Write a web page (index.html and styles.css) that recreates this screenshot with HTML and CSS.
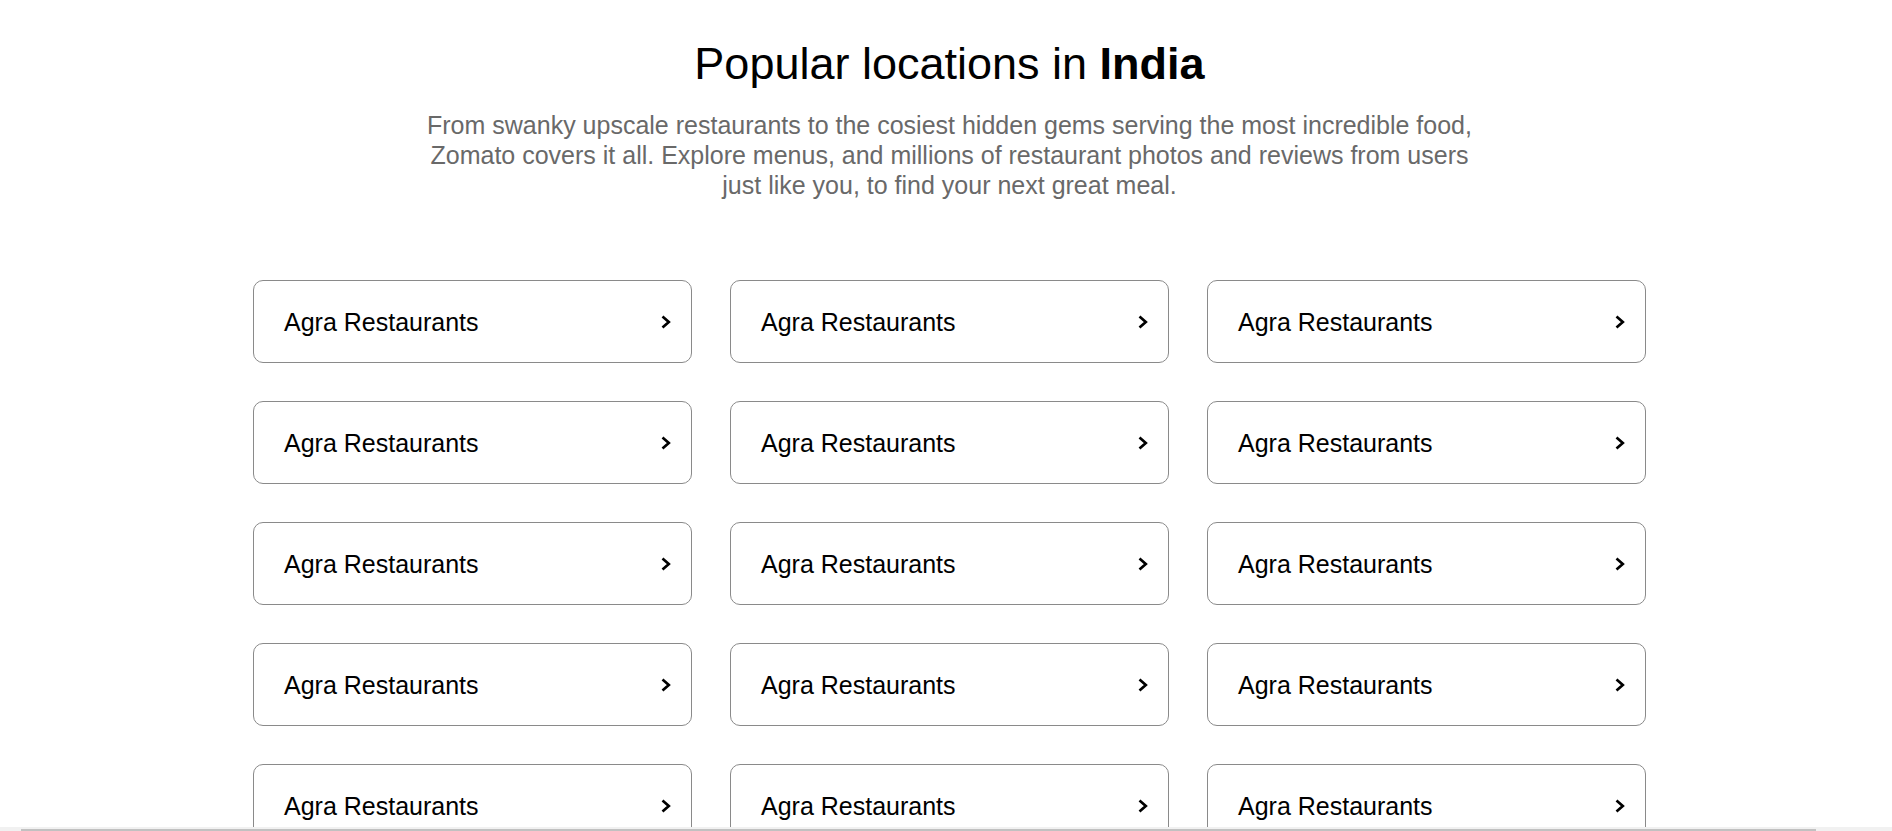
FILE: index.html
```html
<!DOCTYPE html>
<html lang="en">
<head>
<meta charset="utf-8">
<title>Popular locations in India</title>
<link rel="stylesheet" href="styles.css">
</head>
<body>
<div class="page">
  <header class="intro">
    <h1 class="title">Popular locations in <b>India</b></h1>
    <p class="lead">From swanky upscale restaurants to the cosiest hidden gems serving the most incredible food, Zomato covers it all. Explore menus, and millions of restaurant photos and reviews from users just like you, to find your next great meal.</p>
  </header>
  <div class="grid">
    <a class="card" href="#"><span class="name">Agra Restaurants</span><svg class="chev" viewBox="0 0 12 16" width="12" height="16"><polyline points="2.5,2.6 8.8,8.1 2.5,13.6"/></svg></a>
    <a class="card" href="#"><span class="name">Agra Restaurants</span><svg class="chev" viewBox="0 0 12 16" width="12" height="16"><polyline points="2.5,2.6 8.8,8.1 2.5,13.6"/></svg></a>
    <a class="card" href="#"><span class="name">Agra Restaurants</span><svg class="chev" viewBox="0 0 12 16" width="12" height="16"><polyline points="2.5,2.6 8.8,8.1 2.5,13.6"/></svg></a>
    <a class="card" href="#"><span class="name">Agra Restaurants</span><svg class="chev" viewBox="0 0 12 16" width="12" height="16"><polyline points="2.5,2.6 8.8,8.1 2.5,13.6"/></svg></a>
    <a class="card" href="#"><span class="name">Agra Restaurants</span><svg class="chev" viewBox="0 0 12 16" width="12" height="16"><polyline points="2.5,2.6 8.8,8.1 2.5,13.6"/></svg></a>
    <a class="card" href="#"><span class="name">Agra Restaurants</span><svg class="chev" viewBox="0 0 12 16" width="12" height="16"><polyline points="2.5,2.6 8.8,8.1 2.5,13.6"/></svg></a>
    <a class="card" href="#"><span class="name">Agra Restaurants</span><svg class="chev" viewBox="0 0 12 16" width="12" height="16"><polyline points="2.5,2.6 8.8,8.1 2.5,13.6"/></svg></a>
    <a class="card" href="#"><span class="name">Agra Restaurants</span><svg class="chev" viewBox="0 0 12 16" width="12" height="16"><polyline points="2.5,2.6 8.8,8.1 2.5,13.6"/></svg></a>
    <a class="card" href="#"><span class="name">Agra Restaurants</span><svg class="chev" viewBox="0 0 12 16" width="12" height="16"><polyline points="2.5,2.6 8.8,8.1 2.5,13.6"/></svg></a>
    <a class="card" href="#"><span class="name">Agra Restaurants</span><svg class="chev" viewBox="0 0 12 16" width="12" height="16"><polyline points="2.5,2.6 8.8,8.1 2.5,13.6"/></svg></a>
    <a class="card" href="#"><span class="name">Agra Restaurants</span><svg class="chev" viewBox="0 0 12 16" width="12" height="16"><polyline points="2.5,2.6 8.8,8.1 2.5,13.6"/></svg></a>
    <a class="card" href="#"><span class="name">Agra Restaurants</span><svg class="chev" viewBox="0 0 12 16" width="12" height="16"><polyline points="2.5,2.6 8.8,8.1 2.5,13.6"/></svg></a>
    <a class="card" href="#"><span class="name">Agra Restaurants</span><svg class="chev" viewBox="0 0 12 16" width="12" height="16"><polyline points="2.5,2.6 8.8,8.1 2.5,13.6"/></svg></a>
    <a class="card" href="#"><span class="name">Agra Restaurants</span><svg class="chev" viewBox="0 0 12 16" width="12" height="16"><polyline points="2.5,2.6 8.8,8.1 2.5,13.6"/></svg></a>
    <a class="card" href="#"><span class="name">Agra Restaurants</span><svg class="chev" viewBox="0 0 12 16" width="12" height="16"><polyline points="2.5,2.6 8.8,8.1 2.5,13.6"/></svg></a>
  </div>
</div>
<div class="hscroll"><div class="hthumb"></div></div>
</body>
</html>
```

FILE: styles.css
```css
html, body {
  margin: 0;
  padding: 0;
  overflow: hidden;
  background: #ffffff;
}

body {
  font-family: "Liberation Sans", Arial, sans-serif;
  color: #000000;
  height: 831px;
}

.page {
  width: 1899px;
}

.intro {
  display: flex;
  flex-direction: column;
  align-items: center;
  text-align: center;
}

.title {
  margin: 38px 0 0;
  font-size: 45px;
  font-weight: 400;
  line-height: 51px;
}

.title b {
  font-weight: 700;
}

.lead {
  margin: 21px 0 0;
  width: 1070px;
  font-size: 25px;
  line-height: 30px;
  color: #696969;
}

.grid {
  display: grid;
  grid-template-columns: repeat(3, 439px);
  column-gap: 38px;
  row-gap: 38px;
  justify-content: center;
  margin-top: 80px;
}

.card {
  box-sizing: border-box;
  height: 83px;
  border: 1px solid #8a8a8a;
  border-radius: 10px;
  display: flex;
  align-items: center;
  justify-content: space-between;
  padding: 0 19px 0 30px;
  text-decoration: none;
  color: #000000;
}

.name {
  font-size: 25px;
  line-height: 30px;
}

.chev {
  display: block;
  fill: none;
  stroke: #000000;
  stroke-width: 2.7;
  stroke-linecap: butt;
  stroke-linejoin: miter;
}

.hscroll {
  position: fixed;
  left: 0;
  right: 0;
  bottom: 0;
  height: 4px;
  background: #f1f1f1;
}

.hthumb {
  position: absolute;
  left: 21px;
  top: 2px;
  width: 1795px;
  height: 2px;
  background: #c1c1c1;
}
```
